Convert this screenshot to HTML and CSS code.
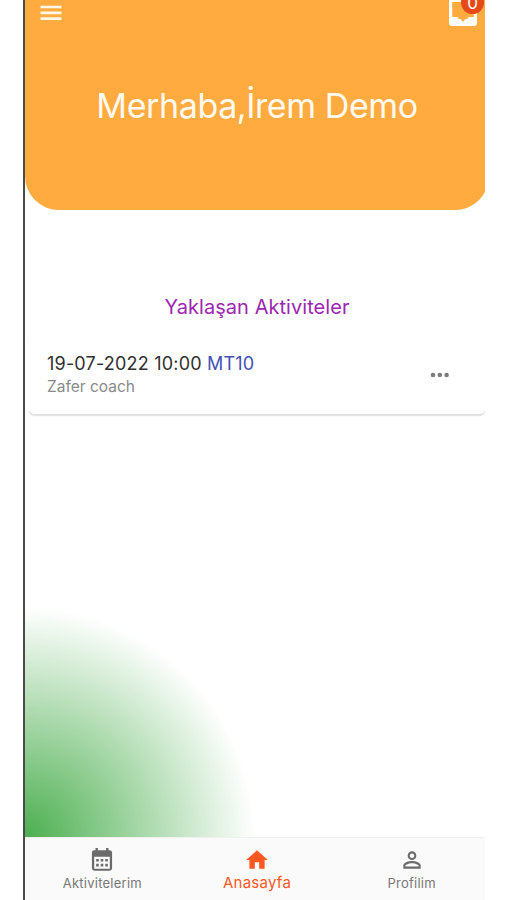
FILE: index.html
```html
<!DOCTYPE html>
<html lang="tr">
<head>
  <meta charset="UTF-8">
  <title>Anasayfa</title>
  <link rel="stylesheet" href="styles.css">
</head>
<body>

<div class="phone">
  <div class="screen">
    <header class="header">
      <div class="toolbar">
        <svg class="menu-icon" viewBox="0 0 22 16">
          <path d="M.5 2h21M.5 7.8h21M.5 13.6h21" fill="none" stroke="#fff8e8" stroke-width="2.7"/>
        </svg>
        <div class="inbox">
          <svg class="inbox-icon" viewBox="0 0 28 30">
            <path fill="#fff" fill-rule="evenodd" d="M3 0h22a3 3 0 0 1 3 3v24a3 3 0 0 1-3 3H3a3 3 0 0 1-3-3V3a3 3 0 0 1 3-3zM3.2 6v15h6v2h2.3l2.5 2.8 2.5-2.8h2.3v-2h6V6z"/>
          </svg>
          <span class="badge">0</span>
        </div>
      </div>
      <h1 class="greeting">Merhaba,İrem Demo</h1>
    </header>

    <main class="content">
      <h2 class="section-title">Yaklaşan Aktiviteler</h2>
      <div class="card">
        <div class="card-text">
          <div class="card-date">19-07-2022 10:00 <span class="card-code">MT10</span></div>
          <div class="card-coach">Zafer coach</div>
        </div>
        <svg class="more-icon" viewBox="0 0 20 6">
          <g fill="#7c7c7c"><circle cx="3" cy="3" r="2.3"/><circle cx="9.8" cy="3" r="2.3"/><circle cx="16.6" cy="3" r="2.3"/></g>
        </svg>
      </div>
    </main>

    <nav class="nav">
      <a class="nav-item">
        <svg class="nav-icon" viewBox="0 0 24 24">
          <g fill="#6b6b6b">
            <path fill-rule="evenodd" d="M5 3h1V1h2.2v2h7.6V1H18v2h1a2.3 2.3 0 0 1 2.3 2.3v14.4A2.3 2.3 0 0 1 19 22H5a2.3 2.3 0 0 1-2.3-2.3V5.3A2.3 2.3 0 0 1 5 3zM4.8 9v11h14.4V9z"/>
            <path d="M6.6 11h2.4v2.4H6.6zM10.8 11h2.4v2.4h-2.4zM15 11h2.4v2.4H15zM6.6 15.5h2.4v2.4H6.6zM10.8 15.5h2.4v2.4h-2.4zM15 15.5h2.4v2.4H15z"/>
          </g>
        </svg>
        <span>Aktivitelerim</span>
      </a>
      <a class="nav-item active">
        <svg class="nav-icon" viewBox="0 0 24 24">
          <path fill="#ff5722" d="M10 20v-6h4v6h5v-8h3L12 3 2 12h3v8z"/>
        </svg>
        <span>Anasayfa</span>
      </a>
      <a class="nav-item">
        <svg class="nav-icon" viewBox="0 0 24 24">
          <path fill="#6b6b6b" d="M12 5.9a2.1 2.1 0 1 1 0 4.2 2.1 2.1 0 0 1 0-4.2m0 9c2.97 0 6.1 1.46 6.1 2.1v1.1H5.9V17c0-.64 3.13-2.1 6.1-2.1M12 4a4 4 0 1 0 0 8 4 4 0 0 0 0-8zm0 9c-2.67 0-8 1.34-8 4v3h16v-3c0-2.66-5.33-4-8-4z"/>
        </svg>
        <span>Profilim</span>
      </a>
    </nav>
  </div>
</div>

</body>
</html>
```

FILE: styles.css
```css
* { margin: 0; padding: 0; box-sizing: border-box; }
body {
  font-family: Inter, 'Liberation Sans', sans-serif;
  background-color: #fff;
  height: 900px;
  overflow: hidden;
}
.phone {
  margin-left: 23px;
  width: 462px;
  height: 900px;
  border-left: 2px solid #4b4a49;
  overflow: hidden;
}
.screen {
  width: 464px;
  height: 900px;
  display: flex;
  flex-direction: column;
}
.header {
  height: 210px;
  background-color: #ffab40;
  border-radius: 0 0 34px 34px;
}
.toolbar {
  display: flex;
  justify-content: space-between;
  height: 26px;
  padding: 0 12px 0 15px;
}
.menu-icon {
  width: 22px;
  height: 16px;
  margin-top: 5px;
}
.inbox {
  position: relative;
  width: 28px;
  height: 30px;
  margin-top: -4px;
}
.inbox-icon {
  display: block;
  width: 28px;
  height: 30px;
}
.badge {
  position: absolute;
  top: -5px;
  left: 12px;
  width: 23px;
  height: 23px;
  border-radius: 50%;
  background-color: #e64a19;
  color: #fff;
  font-size: 17px;
  line-height: 24px;
  text-align: center;
}
.greeting {
  margin-top: 59px;
  font-size: 34px;
  font-weight: 400;
  line-height: 42px;
  letter-spacing: -0.4px;
  text-align: center;
  color: #fffaf0;
}
.content {
  flex: 1;
  padding: 84px 4px 0;
  background-image: radial-gradient(circle at 0 100%, #4caf50, rgba(76, 175, 80, 0) 230px);
}
.section-title {
  font-size: 20px;
  font-weight: 400;
  line-height: 26px;
  letter-spacing: 0.05px;
  text-align: center;
  color: #9c27b0;
}
.card {
  display: flex;
  align-items: center;
  justify-content: space-between;
  height: 79px;
  margin-top: 15px;
  padding: 0 35px 0 18px;
  border-radius: 5px;
  background-color: #fff;
  box-shadow: 0 2px 1px rgba(0, 0, 0, 0.12);
}
.card-date {
  font-size: 18px;
  line-height: 24px;
  letter-spacing: 0.2px;
  color: #303030;
}
.card-code {
  color: #3f51b5;
}
.card-coach {
  font-size: 15.5px;
  line-height: 21px;
  color: #8a8a8a;
}
.more-icon {
  width: 20px;
  height: 6px;
}
.nav {
  display: flex;
  height: 63px;
  background-color: #fafafa;
  border-top: 1px solid #eef1ee;
}
.nav-item {
  flex: 1;
  display: flex;
  flex-direction: column;
  align-items: center;
  padding-top: 9px;
  font-size: 13px;
  line-height: 21px;
  letter-spacing: 0.25px;
  color: #777;
}
.nav-icon {
  width: 26px;
  height: 26px;
}
.nav-item.active {
  font-size: 15px;
  line-height: 19px;
  color: #ff5722;
}
```
